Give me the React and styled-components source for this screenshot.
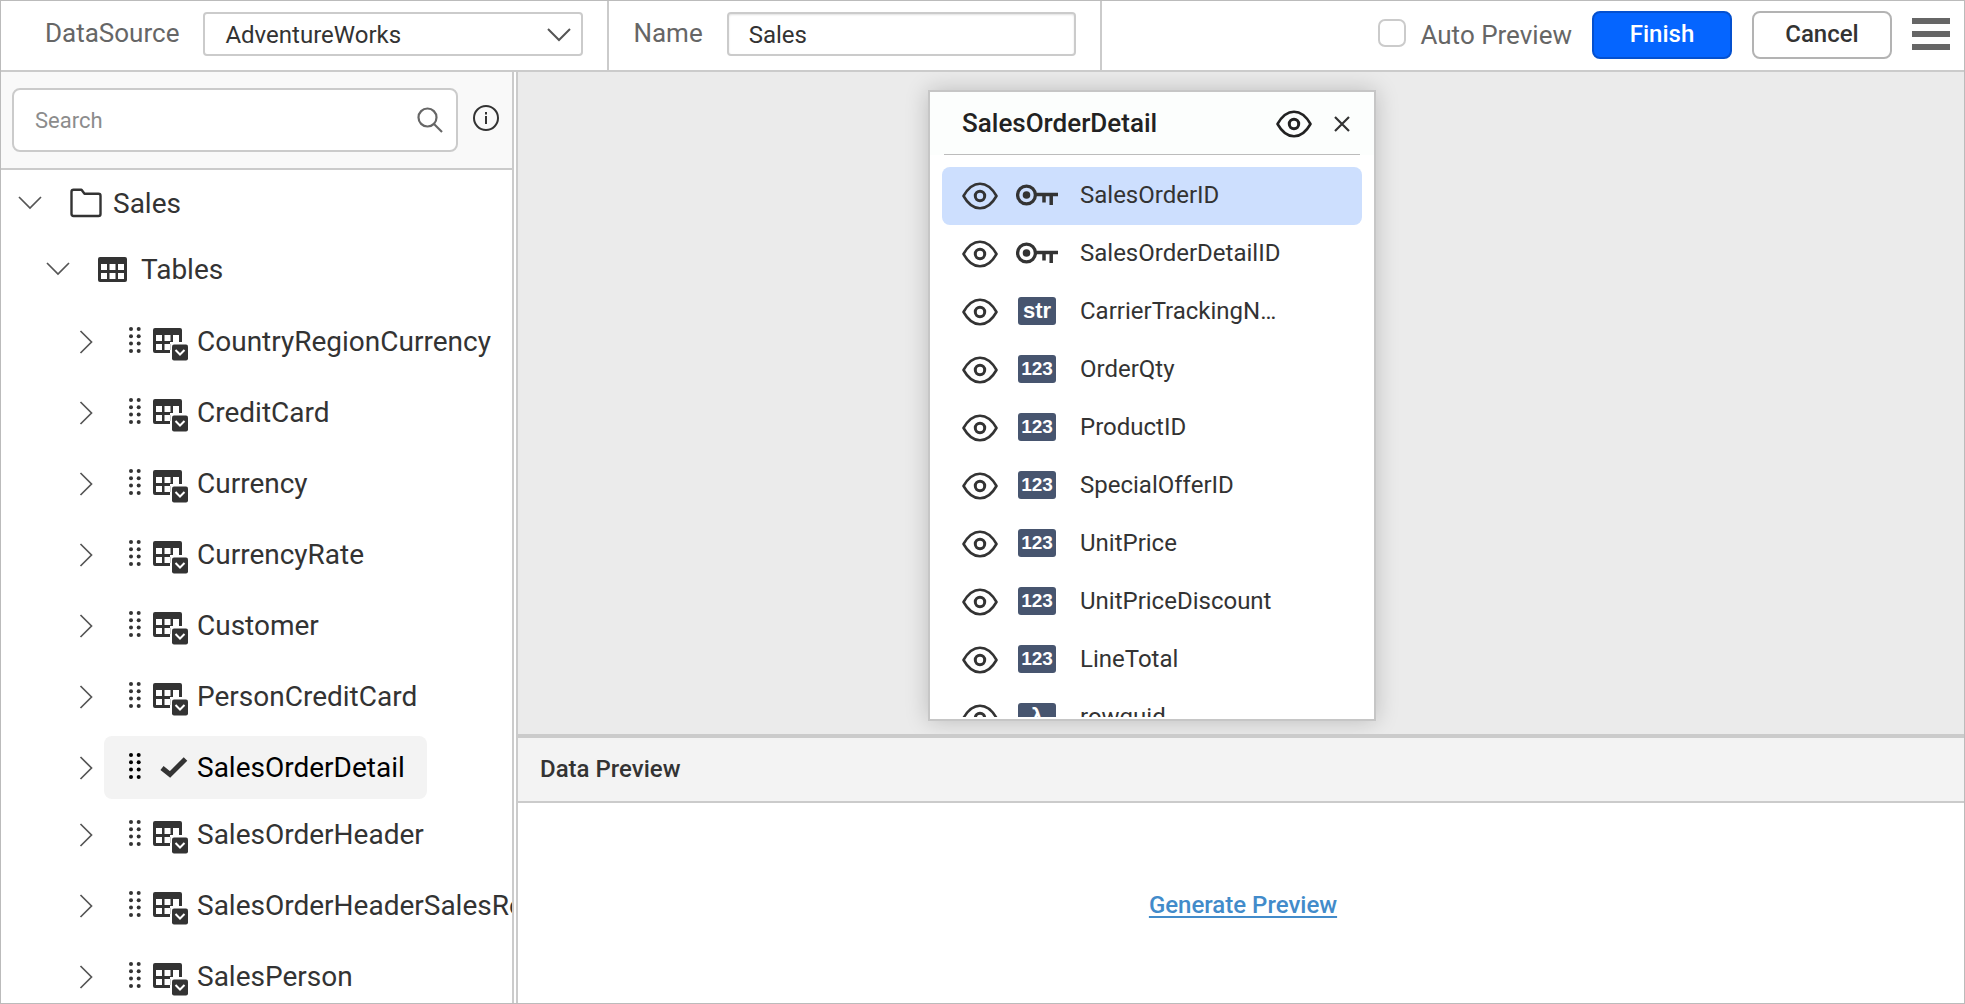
import React, { useState } from "react";
import styled, { createGlobalStyle } from "styled-components";

const GlobalStyle = createGlobalStyle`
  * {
    box-sizing: border-box;
  }
  body {
    margin: 0;
    font-family: Roboto, "Liberation Sans", sans-serif;
    color: #333;
  }
  button, input, select {
    font-family: inherit;
  }
  svg {
    flex: none;
  }
`;

const Page = styled.div`
  display: flex;
  flex-direction: column;
  height: 100vh;
  border: 1px solid #bbb;
  background: #fff;
  overflow: hidden;
`;

/* ---------- toolbar ---------- */

const Toolbar = styled.header`
  display: flex;
  flex: none;
  height: 71px;
  border-bottom: 2px solid #cbcbcb;
`;

const Field = styled.div`
  display: flex;
  align-items: flex-start;
  gap: 24px;
  padding: 11px 24px 0 ${(props) => (props.$first ? "44px" : "24px")};
  border-right: 2px solid #cbcbcb;
`;

const FieldLabel = styled.label`
  font-size: 26px;
  line-height: 42px;
  color: #666;
`;

const SelectWrap = styled.div`
  position: relative;
  width: 380px;

  svg {
    position: absolute;
    right: 12px;
    top: 16px;
    pointer-events: none;
  }
`;

const Select = styled.select`
  width: 100%;
  height: 44px;
  padding: 2px 40px 0 20px;
  appearance: none;
  border: 2px solid #cbcbcb;
  border-radius: 4px;
  background: #fff;
  font-size: 24px;
  color: #333;
`;

const NameInput = styled.input`
  width: 349px;
  height: 44px;
  padding: 2px 20px 0;
  border: 2px solid #cbcbcb;
  border-radius: 4px;
  box-shadow: inset 0 1px 2px rgba(0, 0, 0, 0.12);
  font-size: 24px;
  color: #333;
`;

const Actions = styled.div`
  display: flex;
  align-items: flex-start;
  gap: 20px;
  margin-left: auto;
  padding: 10px 14px 0 0;
`;

const CheckLabel = styled.label`
  display: flex;
  align-items: center;
  gap: 14px;
  height: 48px;
  font-size: 26px;
  color: #666;
`;

const CheckBox = styled.input`
  width: 28px;
  height: 28px;
  margin: 0 0 4px;
  appearance: none;
  border: 2px solid #cbcbcb;
  border-radius: 7px;
  background: #fff;

  &:checked {
    background: #0565ff;
  }
`;

const Button = styled.button`
  width: 140px;
  height: 48px;
  padding: 0 0 2px;
  border: 2px solid ${(props) => (props.$primary ? "#0450cf" : "#b3b3b3")};
  border-radius: 8px;
  background: ${(props) => (props.$primary ? "#0565ff" : "#fff")};
  color: ${(props) => (props.$primary ? "#fff" : "#333")};
  font-size: 24px;
  font-weight: 500;
`;

const IconButton = styled.button`
  display: flex;
  padding: 0;
  border: none;
  background: none;
  color: inherit;
`;

const MenuButton = styled(IconButton)`
  padding-top: 7px;
`;

/* ---------- side panel ---------- */

const Body = styled.div`
  display: flex;
  flex: 1;
  min-height: 0;
`;

const Sidebar = styled.aside`
  display: flex;
  flex-direction: column;
  flex: none;
  width: 513px;
  border-right: 2px solid #cbcbcb;
`;

const SearchBar = styled.div`
  display: flex;
  align-items: flex-start;
  gap: 15px;
  flex: none;
  height: 98px;
  padding: 16px 13px 0 11px;
  border-bottom: 2px solid #cbcbcb;
  background: #f9f9f9;
`;

const SearchBox = styled.div`
  display: flex;
  align-items: center;
  flex: 1;
  height: 64px;
  padding: 0 13px 0 21px;
  border: 2px solid #cbcbcb;
  border-radius: 8px;
  background: #fff;
`;

const SearchInput = styled.input`
  flex: 1;
  min-width: 0;
  padding: 0;
  border: none;
  outline: none;
  font-size: 22px;

  &::placeholder {
    color: #8c8c8c;
  }
`;

const InfoButton = styled(IconButton)`
  margin-top: 17px;
`;

const Tree = styled.ul`
  flex: 1;
  margin: 0;
  padding: 0;
  list-style: none;
  overflow: hidden;
  white-space: nowrap;
  font-size: 28px;
`;

const TreeNode = styled.div`
  display: flex;
  align-items: center;
  gap: 11px;
  height: 66px;
  padding-left: ${(props) => (props.$nested ? "45px" : "17px")};
`;

const NodeIcon = styled.span`
  display: flex;
  margin-left: 17px;
  margin-right: ${(props) => (props.$nested ? "3px" : "0")};
`;

const SubTree = styled.ul`
  margin: 0;
  padding: 0;
  list-style: none;
`;

const TableList = styled(SubTree)`
  padding-top: 4px;
`;

const TableNode = styled.li`
  display: flex;
  align-items: center;
  gap: 11px;
  height: ${(props) => (props.$selected ? "67px" : "71px")};
  padding-top: ${(props) => (props.$selected ? "4px" : "0")};
  padding-left: 78px;
`;

const TableLabel = styled.span`
  display: flex;
  flex: none;
  align-items: center;
  gap: 9px;
  height: 63px;
  padding: 0 22px 0 25px;
  border-radius: 8px;
  background: ${(props) => (props.$selected ? "#f3f3f3" : "transparent")};
  color: ${(props) => (props.$selected ? "#000" : "#333")};
`;

const DragHandle = styled.span`
  display: flex;
  margin-right: 3px;
  padding-bottom: 4px;
`;

const StateIcon = styled.span`
  display: flex;
  padding-top: 6px;
`;

const Splitter = styled.div`
  flex: none;
  width: 4px;
  border-right: 2px solid #cbcbcb;
`;

/* ---------- canvas ---------- */

const Main = styled.main`
  display: flex;
  flex-direction: column;
  flex: 1;
  min-width: 0;
`;

const Canvas = styled.section`
  position: relative;
  flex: 1;
  min-height: 0;
  background: #ebebeb;
  overflow: hidden;
`;

const Card = styled.article`
  position: absolute;
  left: 410px;
  top: 18px;
  display: flex;
  flex-direction: column;
  width: 448px;
  height: 631px;
  padding-bottom: 2px;
  border: 2px solid #c6c6c6;
  background: #fff;
  box-shadow: 0 0 22px rgba(0, 0, 0, 0.2);
`;

const CardHeader = styled.div`
  display: flex;
  align-items: center;
  flex: none;
  height: 63px;
  padding: 0 24px 0 32px;
  background: #fcfefd;
  color: #222;
`;

const CardLine = styled.hr`
  flex: none;
  height: 1px;
  margin: -1px 14px 0;
  border: none;
  background: #bcbcbc;
`;

const CardTitle = styled.h2`
  flex: 1;
  margin: 0;
  padding-bottom: 2px;
  font-size: 26px;
  line-height: 60px;
  font-weight: 500;
`;

const CardButton = styled(IconButton)`
  margin-left: ${(props) => (props.$gap ? "22px" : "0")};
`;

const Columns = styled.ul`
  flex: 1;
  min-height: 0;
  margin: 12px 12px 0;
  padding: 0;
  list-style: none;
  overflow: hidden;
`;

const Column = styled.li`
  display: flex;
  align-items: center;
  height: 58px;
  padding-left: 20px;
  border-radius: 8px;
  background: ${(props) => (props.$selected ? "#cddffe" : "transparent")};
  font-size: 24px;
`;

const ColumnName = styled.span`
  width: 206px;
  padding-bottom: 2px;
  overflow: hidden;
  text-overflow: ellipsis;
  white-space: nowrap;
`;

const TypeCell = styled.span`
  display: flex;
  justify-content: center;
  width: 42px;
  margin: 0 22px 0 18px;
  padding-bottom: 2px;
`;

const TypeBadge = styled.span`
  width: 38px;
  height: 28px;
  border-radius: 3px;
  background: #47556f;
  color: #fff;
  font-family: "Liberation Sans", Arial, sans-serif;
  font-size: ${(props) => (props.$text ? "22px" : "19px")};
  line-height: 28px;
  font-weight: 700;
  text-align: center;
`;

/* ---------- preview ---------- */

const Preview = styled.section`
  display: flex;
  flex-direction: column;
  flex: none;
  height: 269px;
  border-top: 4px solid #cbcbcb;
`;

const PreviewTitle = styled.h2`
  flex: none;
  margin: 0;
  padding-left: 22px;
  border-bottom: 2px solid #cbcbcb;
  background: #f3f3f3;
  font-size: 24px;
  line-height: 63px;
  font-weight: 500;
`;

const PreviewBody = styled.div`
  display: flex;
  align-items: center;
  justify-content: center;
  flex: 1;
  padding: 4px 0 0 4px;
`;

const PreviewLink = styled.a`
  color: #428bca;
  font-size: 24px;
  font-weight: 500;
  text-decoration: underline;
  text-decoration-thickness: 2px;
  text-underline-offset: 3px;
  text-decoration-skip-ink: none;
`;

/* ---------- icons ---------- */

const ChevronDown = () => (
  <svg width="24" height="24" viewBox="0 0 24 24" fill="none" stroke="#555" strokeWidth="1.7">
    <path d="M1 6L12 17L23 6" />
  </svg>
);

const ChevronRight = () => (
  <svg width="14" height="24" viewBox="0 0 14 24" fill="none" stroke="#555" strokeWidth="1.7">
    <path d="M1.5 1L12.5 12L1.5 23" />
  </svg>
);

const EyeIcon = () => (
  <svg width="36" height="28" viewBox="0 0 36 28" fill="none" stroke="currentColor" strokeWidth="2.6">
    <path
      d="M1.500 14C6 6 11.500 1.700 18 1.700S30 6 34.500 14C30 22 24.500 26.300 18 26.300S6 22 1.500 14Z"
      strokeLinejoin="round"
    />
    <circle cx="18" cy="14" r="4.7" strokeWidth="3" />
  </svg>
);

const KeyIcon = () => (
  <svg width="42" height="22" viewBox="0 0 42 22" fill="none" stroke="#333">
    <circle cx="10.500" cy="11" r="8.9" strokeWidth="3.300" />
    <circle cx="10.500" cy="11" r="3.800" fill="#333" stroke="none" />
    <path d="M20 10.500H42M28 11V18.500M35.200 11V21" strokeWidth="3.500" />
  </svg>
);

const FolderIcon = () => (
  <svg width="32" height="30" viewBox="0 0 32 30" fill="none" stroke="#333" strokeWidth="2.400">
    <path
      d="M3.500 1.700H11.500L14.500 5.700H28.500Q30.500 5.700 30.500 7.700V26Q30.500 28 28.500 28H3.500Q1.500 28 1.500 26V3.700Q1.500 1.700 3.500 1.700Z"
      strokeLinejoin="round"
    />
  </svg>
);

const GridIcon = () => (
  <svg width="29" height="25" viewBox="0 0 29 25">
    <path
      fill="#333"
      fillRule="evenodd"
      d="M2 0H27Q29 0 29 2V23Q29 25 27 25H2Q0 25 0 23V2Q0 0 2 0ZM3 7V13H9V7ZM11.500 7V13H17.500V7ZM20 7V13H26V7ZM3 16V22H9V16ZM11.500 16V22H17.500V16ZM20 16V22H26V16Z"
    />
  </svg>
);

const TableIcon = () => (
  <svg width="35" height="33" viewBox="0 0 35 33">
    <path
      fill="#333"
      fillRule="evenodd"
      d="M2 0H27Q29 0 29 2V14H26V7H20V14H17V25H2Q0 25 0 23V2Q0 0 2 0ZM3 7V13H9V7ZM11.500 7V13H17.500V7ZM3 16V22H9V16ZM11.500 16V22H17.500V16Z"
    />
    <rect x="17.500" y="15" width="18" height="18" fill="#fff" />
    <rect x="19" y="16.500" width="16" height="16" rx="2" fill="#333" />
    <path d="M22.500 22L27 26.500L31.500 22" fill="none" stroke="#fff" strokeWidth="2" />
  </svg>
);

const CheckIcon = () => (
  <svg width="35" height="33" viewBox="0 0 35 33">
    <path d="M9 14L17 20.500L32.500 5" fill="none" stroke="#333" strokeWidth="5" />
  </svg>
);

const DragIcon = () => (
  <svg width="12" height="26" viewBox="0 0 12 26" fill="currentColor">
    {[2, 9.3, 16.6, 24].map((y) => (
      <React.Fragment key={y}>
        <circle cx="2" cy={y} r="2" />
        <circle cx="9.7" cy={y} r="2" />
      </React.Fragment>
    ))}
  </svg>
);

const SearchIcon = () => (
  <svg width="26" height="26" viewBox="0 0 26 26" fill="none" stroke="#666" strokeWidth="2.200">
    <circle cx="10.500" cy="10.500" r="9" />
    <path d="M17 17L25 25" />
  </svg>
);

const InfoIcon = () => (
  <svg width="26" height="26" viewBox="0 0 26 26" fill="none" stroke="#333" strokeWidth="2">
    <circle cx="13" cy="13" r="12" />
    <path d="M13 11V19M13 7V9.500" />
  </svg>
);

const CloseIcon = () => (
  <svg width="16" height="16" viewBox="0 0 16 16" stroke="#333" strokeWidth="2.200">
    <path d="M1 1L15 15M15 1L1 15" />
  </svg>
);

const MenuIcon = () => (
  <svg width="38" height="32" viewBox="0 0 38 32" fill="#666">
    <rect width="38" height="6" />
    <rect y="13" width="38" height="6" />
    <rect y="26" width="38" height="6" />
  </svg>
);

const tables = [
  "CountryRegionCurrency",
  "CreditCard",
  "Currency",
  "CurrencyRate",
  "Customer",
  "PersonCreditCard",
  "SalesOrderDetail",
  "SalesOrderHeader",
  "SalesOrderHeaderSalesReason",
  "SalesPerson",
];

const columns = [
  { name: "SalesOrderID", type: "key" },
  { name: "SalesOrderDetailID", type: "key" },
  { name: "CarrierTrackingNumber", type: "str" },
  { name: "OrderQty", type: "123" },
  { name: "ProductID", type: "123" },
  { name: "SpecialOfferID", type: "123" },
  { name: "UnitPrice", type: "123" },
  { name: "UnitPriceDiscount", type: "123" },
  { name: "LineTotal", type: "123" },
  { name: "rowguid", type: "λ" },
];

function App() {
  const [name, setName] = useState("Sales");
  const selectedTable = "SalesOrderDetail";

  return (
    <Page>
      <GlobalStyle />
      <Toolbar>
        <Field $first>
          <FieldLabel htmlFor="datasource">DataSource</FieldLabel>
          <SelectWrap>
            <Select id="datasource">
              <option>AdventureWorks</option>
            </Select>
            <svg width="24" height="14" viewBox="0 0 24 14" fill="none" stroke="#555" strokeWidth="2">
              <path d="M1 1L12 12L23 1" />
            </svg>
          </SelectWrap>
        </Field>
        <Field>
          <FieldLabel htmlFor="name">Name</FieldLabel>
          <NameInput id="name" value={name} onChange={(e) => setName(e.target.value)} />
        </Field>
        <Actions>
          <CheckLabel>
            <CheckBox type="checkbox" />
            Auto Preview
          </CheckLabel>
          <Button $primary>Finish</Button>
          <Button>Cancel</Button>
          <MenuButton aria-label="Menu">
            <MenuIcon />
          </MenuButton>
        </Actions>
      </Toolbar>
      <Body>
        <Sidebar>
          <SearchBar>
            <SearchBox>
              <SearchInput placeholder="Search" aria-label="Search" />
              <SearchIcon />
            </SearchBox>
            <InfoButton aria-label="Info">
              <InfoIcon />
            </InfoButton>
          </SearchBar>
          <Tree>
            <li>
              <TreeNode>
                <ChevronDown />
                <NodeIcon>
                  <FolderIcon />
                </NodeIcon>
                Sales
              </TreeNode>
              <SubTree>
                <li>
                  <TreeNode $nested>
                    <ChevronDown />
                    <NodeIcon $nested>
                      <GridIcon />
                    </NodeIcon>
                    Tables
                  </TreeNode>
                  <TableList>
                    {tables.map((table) => {
                      const selected = table === selectedTable;
                      return (
                        <TableNode key={table} $selected={selected}>
                          <ChevronRight />
                          <TableLabel $selected={selected}>
                            <DragHandle>
                              <DragIcon />
                            </DragHandle>
                            <StateIcon>{selected ? <CheckIcon /> : <TableIcon />}</StateIcon>
                            {table}
                          </TableLabel>
                        </TableNode>
                      );
                    })}
                  </TableList>
                </li>
              </SubTree>
            </li>
          </Tree>
        </Sidebar>
        <Splitter />
        <Main>
          <Canvas>
            <Card>
              <CardHeader>
                <CardTitle>SalesOrderDetail</CardTitle>
                <CardButton aria-label="Toggle all columns">
                  <EyeIcon />
                </CardButton>
                <CardButton $gap aria-label="Close">
                  <CloseIcon />
                </CardButton>
              </CardHeader>
              <CardLine />
              <Columns>
                {columns.map((column, index) => (
                  <Column key={column.name} $selected={index === 0}>
                    <EyeIcon />
                    <TypeCell>
                      {column.type === "key" ? (
                        <KeyIcon />
                      ) : (
                        <TypeBadge $text={column.type !== "123"}>{column.type}</TypeBadge>
                      )}
                    </TypeCell>
                    <ColumnName>{column.name}</ColumnName>
                  </Column>
                ))}
              </Columns>
            </Card>
          </Canvas>
          <Preview>
            <PreviewTitle>Data Preview</PreviewTitle>
            <PreviewBody>
              <PreviewLink href="#preview">Generate Preview</PreviewLink>
            </PreviewBody>
          </Preview>
        </Main>
      </Body>
    </Page>
  );
}

export default App;
